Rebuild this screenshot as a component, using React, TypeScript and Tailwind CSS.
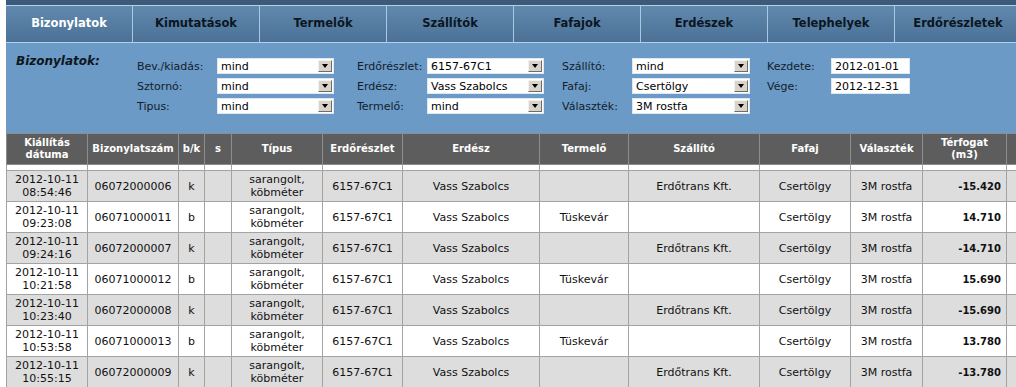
import React from 'react'

const tabs = ['Bizonylatok', 'Kimutatások', 'Termelők', 'Szállítók', 'Fafajok', 'Erdészek', 'Telephelyek', 'Erdőrészletek']

type Row = { time: string; num: string; bk: string; termelo: string; szallito: string; vol: string }

const rows: Row[] = [
  { time: '08:54:46', num: '06072000006', bk: 'k', termelo: '', szallito: 'Erdőtrans Kft.', vol: '-15.420' },
  { time: '09:23:08', num: '06071000011', bk: 'b', termelo: 'Tüskevár', szallito: '', vol: '14.710' },
  { time: '09:24:16', num: '06072000007', bk: 'k', termelo: '', szallito: 'Erdőtrans Kft.', vol: '-14.710' },
  { time: '10:21:58', num: '06071000012', bk: 'b', termelo: 'Tüskevár', szallito: '', vol: '15.690' },
  { time: '10:23:40', num: '06072000008', bk: 'k', termelo: '', szallito: 'Erdőtrans Kft.', vol: '-15.690' },
  { time: '10:53:58', num: '06071000013', bk: 'b', termelo: 'Tüskevár', szallito: '', vol: '13.780' },
  { time: '10:55:15', num: '06072000009', bk: 'k', termelo: '', szallito: 'Erdőtrans Kft.', vol: '-13.780' },
]

const widths = [81, 91, 26, 27, 91, 80, 137, 89, 131, 91, 72, 84, 60]

const Select = ({ value, w = 117 }: { value: string; w?: number }) => (
  <div className="relative h-[16px] bg-white border border-[#dfe8f0] flex items-center" style={{ width: w }}>
    <span className="pl-[3px] text-[11px] leading-none text-black">{value}</span>
    <div className="absolute right-[1px] top-[1px] w-[14px] h-[12px] bg-[#d8d4cc] border-t border-l border-t-[#f4f2ee] border-l-[#f4f2ee] border-r border-b border-r-[#6f6c66] border-b-[#6f6c66] flex items-center justify-center">
      <div className="w-0 h-0 border-l-[3.5px] border-r-[3.5px] border-t-[4px] border-l-transparent border-r-transparent border-t-black" />
    </div>
  </div>
)

const Input = ({ value }: { value: string }) => (
  <div className="h-[16px] w-[79px] bg-white border border-[#dfe8f0] flex items-center pl-[3px] text-[11px] leading-none text-black">{value}</div>
)

const Label = ({ children }: { children: React.ReactNode }) => (
  <div className="h-[16px] flex items-center text-[11px] leading-none text-[#14202c]">{children}</div>
)

const App = () => {
  return (
    <div className="w-[1016px] h-[387px] overflow-hidden bg-white font-['DejaVu_Sans',sans-serif]">
      <div className="ml-[6px] w-[1100px]">
        <div className="h-[5px] bg-[#3c5b7b]" />
        <div className="flex h-[38px] border-y border-[#b3d0e8] bg-gradient-to-b from-[#6189ad] to-[#4b7196]">
          {tabs.map((t, i) => (
            <div
              key={t}
              className={`w-[127px] shrink-0 border-r border-[#a9c8e2] flex items-center justify-center font-bold text-[11.5px] ${i === 0 ? 'text-white' : 'text-[#0b1622]'}`}
            >
              {t}
            </div>
          ))}
        </div>
        <div className="h-[90px] bg-[#6a9ac5] flex">
          <div className="w-[131px] pl-[10px] pt-[9px] font-bold italic text-[12px] text-[#0d1620]">Bizonylatok:</div>
          <div className="pt-[15px] grid grid-cols-[80px_117px] gap-y-[4px] content-start">
            <Label>Bev./kiadás:</Label>
            <Select value="mind" />
            <Label>Sztornó:</Label>
            <Select value="mind" />
            <Label>Tipus:</Label>
            <Select value="mind" />
          </div>
          <div className="pl-[23px] pt-[15px] grid grid-cols-[70px_117px] gap-y-[4px] content-start">
            <Label>Erdőrészlet:</Label>
            <Select value="6157-67C1" />
            <Label>Erdész:</Label>
            <Select value="Vass Szabolcs" />
            <Label>Termelő:</Label>
            <Select value="mind" />
          </div>
          <div className="pl-[18px] pt-[15px] grid grid-cols-[70px_118px] gap-y-[4px] content-start">
            <Label>Szállító:</Label>
            <Select value="mind" w={118} />
            <Label>Fafaj:</Label>
            <Select value="Csertölgy" w={118} />
            <Label>Választék:</Label>
            <Select value="3M rostfa" w={118} />
          </div>
          <div className="pl-[17px] pt-[15px] grid grid-cols-[64px_79px] gap-y-[4px] content-start">
            <Label>Kezdete:</Label>
            <Input value="2012-01-01" />
            <Label>Vége:</Label>
            <Input value="2012-12-31" />
          </div>
        </div>
        <table className="border-collapse table-fixed text-[11px] text-[#111]" style={{ width: widths.reduce((a, b) => a + b, 0) }}>
          <colgroup>
            {widths.map((w, i) => (
              <col key={i} style={{ width: w }} />
            ))}
          </colgroup>
          <thead>
            <tr className="h-[31px] bg-[#5d5d5d] text-white font-bold text-[10px] leading-[12px]">
              {['Kiállítás dátuma', 'Bizonylatszám', 'b/k', 's', 'Típus', 'Erdőrészlet', 'Erdész', 'Termelő', 'Szállító', 'Fafaj', 'Választék', 'Térfogat (m3)', ''].map((h, i) => (
                <th key={i} className="border border-[#8d8d8d] px-[2px] font-bold text-center align-middle">
                  {h === 'Kiállítás dátuma' ? (
                    <>Kiállítás<br />dátuma</>
                  ) : h === 'Térfogat (m3)' ? (
                    <>Térfogat<br />(m3)</>
                  ) : (
                    h
                  )}
                </th>
              ))}
            </tr>
          </thead>
          <tbody>
            <tr className="h-[6px] bg-white">
              {widths.map((_, i) => (
                <td key={i} className="border border-[#a3a3a3] p-0" />
              ))}
            </tr>
            {rows.map((r, ri) => (
              <tr key={r.num} className={`h-[31px] leading-[13px] ${ri % 2 === 0 ? 'bg-[#dddddd]' : 'bg-white'}`}>
                <td className="border border-[#a3a3a3] text-center">2012-10-11<br />{r.time}</td>
                <td className="border border-[#a3a3a3] text-center">{r.num}</td>
                <td className="border border-[#a3a3a3] text-center">{r.bk}</td>
                <td className="border border-[#a3a3a3]" />
                <td className="border border-[#a3a3a3] text-center">sarangolt,<br />köbméter</td>
                <td className="border border-[#a3a3a3] text-center">6157-67C1</td>
                <td className="border border-[#a3a3a3] text-center">Vass Szabolcs</td>
                <td className="border border-[#a3a3a3] text-center">{r.termelo}</td>
                <td className="border border-[#a3a3a3] text-center">{r.szallito}</td>
                <td className="border border-[#a3a3a3] text-center">Csertölgy</td>
                <td className="border border-[#a3a3a3] text-center">3M rostfa</td>
                <td className="border border-[#a3a3a3] text-right pr-[5px] font-bold text-[10px]">{r.vol}</td>
                <td className="border border-[#a3a3a3]" />
              </tr>
            ))}
          </tbody>
        </table>
      </div>
    </div>
  )
}

export default App
